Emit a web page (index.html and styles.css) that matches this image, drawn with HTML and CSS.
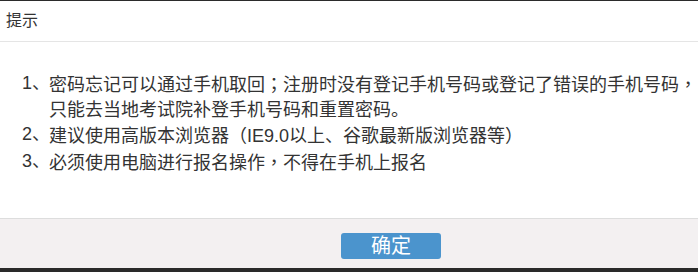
FILE: index.html
```html
<!DOCTYPE html>
<html lang="zh-CN">
<head>
<meta charset="utf-8">
<title>提示</title>
<link rel="stylesheet" href="styles.css">
</head>
<body>
<div class="dialog">
  <div class="dialog-header">提示</div>
  <div class="dialog-body">
    <div class="item"><span class="num">1、</span><span class="text">密码忘记可以通过手机取回<span class="punct" lang="zh-TW">；</span>注册时没有登记手机号码或登记了错误的手机号码<span class="punct" lang="zh-TW">，</span><br>只能去当地考试院补登手机号码和重置密码。</span></div>
    <div class="item"><span class="num">2、</span><span class="text">建议使用高版本浏览器<span class="punct" lang="zh-TW">（</span>IE9.0以上、谷歌最新版浏览器等<span class="punct" lang="zh-TW">）</span></span></div>
    <div class="item"><span class="num">3、</span><span class="text">必须使用电脑进行报名操作<span class="punct" lang="zh-TW">，</span>不得在手机上报名</span></div>
  </div>
  <div class="dialog-footer">
    <button class="btn-ok" type="button">确定</button>
  </div>
  <div class="backdrop-strip"></div>
</div>
</body>
</html>
```
FILE: styles.css
```css
html, body {
  margin: 0;
  padding: 0;
  background: #ffffff;
}
body {
  font-family: "Liberation Sans", "Noto Sans CJK SC", sans-serif;
  color: #333333;
  width: 698px;
  height: 272px;
  overflow: hidden;
}
.dialog {
  display: flex;
  flex-direction: column;
  width: 698px;
  height: 272px;
  border-top: 1px solid #2b2b2b;
  box-sizing: border-box;
}
.dialog-header {
  height: 40px;
  line-height: 40px;
  padding-left: 6px;
  font-size: 16px;
  color: #333333;
  border-bottom: 1px solid #e5e5e5;
  flex: none;
}
.dialog-body {
  height: 176px;
  box-sizing: border-box;
  padding: 29px 0 0 22px;
  font-size: 18px;
  line-height: 24.7px;
  flex: none;
}
.item {
  display: flex;
  white-space: nowrap;
}
.num {
  width: 27px;
  flex: none;
}
.text {
  flex: none;
}
.punct {
  font-family: "Noto Sans CJK TC", sans-serif;
}
.dialog-footer {
  height: 50px;
  box-sizing: border-box;
  border-top: 1px solid #dddddd;
  background: #f3f0f1;
  padding: 14px 0 0 341px;
  flex: none;
}
.btn-ok {
  display: block;
  width: 100px;
  height: 26px;
  margin: 0;
  padding: 0;
  border: none;
  border-radius: 3px;
  background: #4b94cd;
  color: #ffffff;
  font-family: "Liberation Sans", "Noto Sans CJK SC", sans-serif;
  font-size: 20px;
  line-height: 26px;
  text-align: center;
}
.backdrop-strip {
  flex: 1;
  background: #2a2a2a;
}
```
